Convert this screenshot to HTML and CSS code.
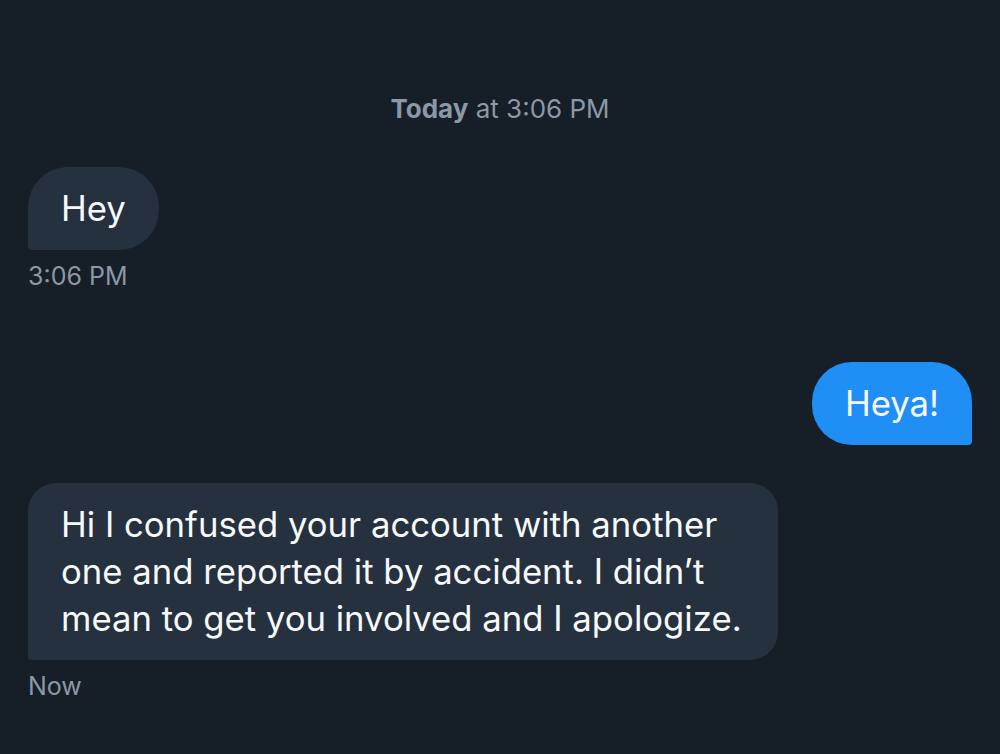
FILE: index.html
```html
<!DOCTYPE html>
<html>
<head>
<meta charset="utf-8">
<link rel="stylesheet" href="styles.css">
</head>
<body>
<main class="thread">
  <div class="day"><strong>Today</strong> at 3:06 PM</div>
  <div class="msg in first">
    <div class="bubble">Hey</div>
    <div class="time">3:06 PM</div>
  </div>
  <div class="msg out">
    <div class="bubble">Heya!</div>
  </div>
  <div class="msg in last">
    <div class="bubble">Hi I confused your account with another<br>one and reported it by accident. I didn’t<br>mean to get you involved and I apologize.</div>
    <div class="time">Now</div>
  </div>
</main>
</body>
</html>
```
FILE: styles.css
```css
html, body {
  margin: 0;
  padding: 0;
  background: #161e28;
  height: 100%;
}
body {
  font-family: Inter, "Noto Sans", sans-serif;
  color: #ffffff;
}
.thread {
  display: flex;
  flex-direction: column;
  padding: 94px 28px 0;
}
.day {
  text-align: center;
  font-size: 26px;
  line-height: 30px;
  color: #8b98a5;
}
.day strong {
  font-weight: 700;
}
.msg {
  display: flex;
  flex-direction: column;
}
.msg.in { align-items: flex-start; }
.msg.out { align-items: flex-end; margin-top: 71px; }
.msg.first { margin-top: 43px; }
.msg.last { margin-top: 38px; }
.bubble {
  font-size: 34.7px;
  line-height: 47px;
  padding: 18px 33px;
  border-radius: 40px;
  background: #25313f;
  color: #f7f9f9;
}
.in .bubble { border-bottom-left-radius: 4px; }
.out .bubble {
  background: #1f8ff5;
  border-bottom-right-radius: 4px;
}
.last .bubble {
  border-radius: 28px 28px 28px 4px;
  padding-right: 36px;
}
.time {
  margin-top: 11px;
  font-size: 25px;
  line-height: 30px;
  color: #8b98a5;
}
```
